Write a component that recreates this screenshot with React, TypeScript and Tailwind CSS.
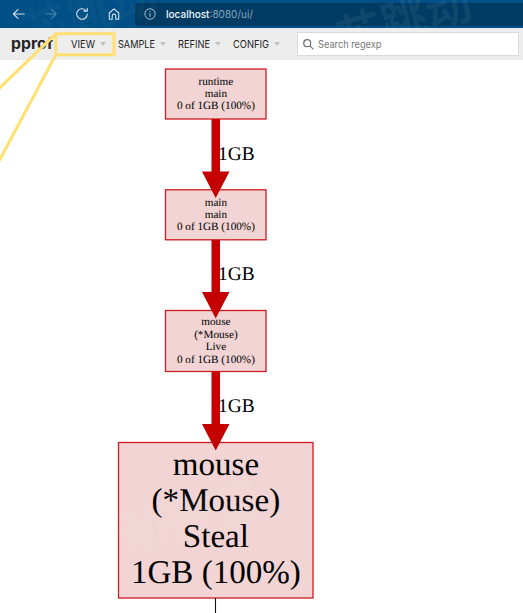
import React from "react";

const serif = "font-['Liberation_Serif',serif]";

function MenuItem({ label, className, width }: { label: string; className: string; width: number }) {
  return (
    <div className={`flex shrink-0 items-center justify-between ${className}`}>
      <svg width={width} height="16" className="shrink-0 overflow-visible">
        <text x="0" y="12" textLength={width} lengthAdjust="spacingAndGlyphs" className="fill-[#222222] font-['Inter',sans-serif] text-[10.6px]">{label}</text>
      </svg>
      <svg width="6" height="4" className="shrink-0" viewBox="0 0 6 4"><path d="M0 0h6L3 4z" fill="#c2c2c2" /></svg>
    </div>
  );
}

function BrowserBar() {
  return (
    <div className="relative flex h-7 w-full items-center overflow-hidden bg-[#004f86] pl-[12px] text-[#d5e2ec]">
      <svg width="14" height="14" viewBox="0 0 14 14" fill="none" stroke="currentColor" strokeWidth="1.1" strokeLinecap="round" strokeLinejoin="round"><path d="M12.2 7H1.4M6 2.4 1.4 7 6 11.4" /></svg>
      <svg className="ml-[18px] text-[#4883aa]" width="14" height="14" viewBox="0 0 14 14" fill="none" stroke="currentColor" strokeWidth="1.1" strokeLinecap="round" strokeLinejoin="round"><path d="M1.4 7h10.8M7.6 2.4 12.2 7l-4.6 4.4" /></svg>
      <svg className="ml-[17px]" width="14" height="14" viewBox="0 0 14 14" fill="none" stroke="currentColor" strokeWidth="1.1" strokeLinecap="round" strokeLinejoin="round"><path d="M12.3 7.1a5.3 5.3 0 1 1-1.7-4M8.7 4.1h3.6V1.2" /></svg>
      <svg className="ml-[18px]" width="14" height="14" viewBox="0 0 14 14" fill="none" stroke="currentColor" strokeWidth="1.1" strokeLinejoin="round"><path d="M2.3 6 7 1.8 11.7 6v6.2H8.8V8.9a1.8 1.8 0 0 0-3.6 0v3.3H2.3z" /></svg>
      <div className="ml-[14px] flex h-[23px] flex-1 items-center rounded-l-[4px] bg-[#003b64] pl-[9px]">
        <svg width="12" height="12" viewBox="0 0 12 12" fill="none" stroke="#b5c9d8" strokeWidth=".9"><circle cx="6" cy="6" r="5.2" /><path d="M6 5.2v3.6M6 3v1" /></svg>
        <svg width="100" height="16" className="ml-[10px] font-['Inter',sans-serif] text-[10.8px]">
          <text x="0" y="11.5" textLength="87" lengthAdjust="spacingAndGlyphs" fill="#87a5bc"><tspan fill="#f2f7fa" className="font-medium">localhost</tspan>:8080/ui/</text>
        </svg>
      </div>
      <svg className="pointer-events-none absolute left-0 top-0 font-['Noto_Sans_CJK_SC',sans-serif] text-[46px] font-bold" width="523" height="28">
        <text transform="translate(342 55) rotate(-16)" className="fill-white/6">芯跳动</text>
        <text transform="translate(28 48) rotate(-16)" className="fill-white/4">芯跳动</text>
      </svg>
    </div>
  );
}

function Toolbar() {
  return (
    <div className="flex h-8 w-full items-center bg-[#ededed] pl-[11px]">
      <svg width="43" height="24" className="shrink-0 overflow-visible">
        <text x="0" y="17" textLength="42" lengthAdjust="spacingAndGlyphs" className="fill-[#252525] font-['Inter',sans-serif] text-[15.5px] font-bold">pprof</text>
      </svg>
      <MenuItem label="VIEW" className="ml-[17px] w-[35px]" width={24} />
      <MenuItem label="SAMPLE" className="ml-[12px] w-[48px]" width={37} />
      <MenuItem label="REFINE" className="ml-[12px] w-[43px]" width={32} />
      <MenuItem label="CONFIG" className="ml-[12px] w-[47px]" width={36} />
      <div className="ml-[17px] flex h-6 w-[222px] items-center border border-[#dadada] bg-white pl-[5px]">
        <svg width="11" height="11" viewBox="0 0 11 11" fill="none" stroke="#707070" strokeWidth="1.2"><circle cx="4.2" cy="4.2" r="3.5" /><path d="m6.7 6.7 3.7 3.7" /></svg>
        <svg width="70" height="16" className="ml-[4px] font-['Inter',sans-serif] text-[10.6px]">
          <text x="0" y="11.5" textLength="63.5" lengthAdjust="spacingAndGlyphs" fill="#777777">Search regexp</text>
        </svg>
      </div>
    </div>
  );
}

type Line = [text: string, baseline: number];
type GraphNode = { x: number; y: number; w: number; h: number; big?: boolean; lines: Line[] };

const nodes: GraphNode[] = [
  { x: 165.5, y: 69, w: 100.5, h: 50, lines: [["runtime", 84.5], ["main", 97], ["0 of 1GB (100%)", 109.2]] },
  { x: 165.5, y: 189.8, w: 100.5, h: 50, lines: [["main", 205.5], ["main", 218], ["0 of 1GB (100%)", 230.2]] },
  { x: 165.5, y: 310.5, w: 100.5, h: 61, lines: [["mouse", 325.2], ["(*Mouse)", 338], ["Live", 350.2], ["0 of 1GB (100%)", 362.5]] },
  { x: 118.5, y: 442.5, w: 194.5, h: 155.5, big: true, lines: [["mouse", 474.9], ["(*Mouse)", 511], ["Steal", 547], ["1GB (100%)", 583]] },
];

const edges = [
  { from: 119, to: 198, label: 159.5 },
  { from: 240, to: 318.5, label: 280.3 },
  { from: 371.5, to: 450.5, label: 412.3 },
];

function Graph() {
  return (
    <svg width="523" height="553" viewBox="0 60 523 553" className={`block ${serif}`}>
      {nodes.map((n) => (
        <g key={n.y}>
          <rect x={n.x} y={n.y} width={n.w} height={n.h} fill="#f1d4d3" stroke="#cf1c22" strokeWidth="1.3" />
          {n.lines.map(([text, y]) => (
            <text key={y} x={215.9} y={y} textAnchor="middle" textRendering="geometricPrecision" className={n.big ? "text-[33.1px]" : "text-[11.2px]"}>{text}</text>
          ))}
        </g>
      ))}
      {edges.map((e) => (
        <g key={e.from}>
          <path d={`M211.5 ${e.from}h8.5V${e.to - 26.5}h9.5L215.7 ${e.to} 202 ${e.to - 26.5}h9.5z`} fill="#c40000" />
          <text x="218" y={e.label} textRendering="geometricPrecision" className="text-[19.4px]">1GB</text>
        </g>
      ))}
      <path d="M215.5 598v15" stroke="#111111" strokeWidth="1.1" />
      <text transform="translate(124 553) rotate(-15)" className="fill-white/8 font-['Noto_Sans_CJK_SC',sans-serif] text-[48px] font-bold">动智营</text>
    </svg>
  );
}

export default function App() {
  return (
    <main className="relative flex h-[613px] w-[523px] flex-col overflow-hidden bg-white">
      <BrowserBar />
      <Toolbar />
      <Graph />
      <svg className="pointer-events-none absolute left-0 top-0" width="523" height="180" fill="none" stroke="#ffe071" strokeWidth="3">
        <path d="M55.8 33.8H114V54.8H55.8zM55.8 33.8-2 89.5M55.8 54.8-2 163" />
      </svg>
    </main>
  );
}
